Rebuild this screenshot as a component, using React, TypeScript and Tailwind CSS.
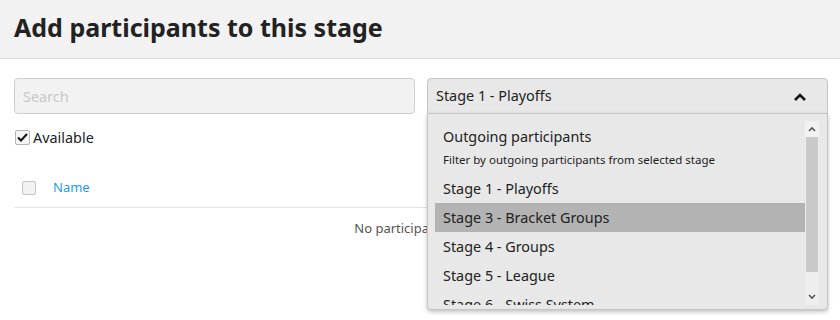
import { useState } from "react"

const stages = [
  "Stage 1 - Playoffs",
  "Stage 3 - Bracket Groups",
  "Stage 4 - Groups",
  "Stage 5 - League",
  "Stage 6 - Swiss System",
]

export default function App() {
  const [available, setAvailable] = useState(true)
  const [search, setSearch] = useState("")
  const active = "Stage 3 - Bracket Groups"

  return (
    <main className="w-[840px] h-[320px] overflow-hidden bg-white text-[#222] font-['Noto_Sans',sans-serif]">
      {/* HEADER */}
      <div className="h-[59px] bg-[#f2f2f2] border-b border-[#dedede] flex items-center px-[14px]">
        <h1 className="text-[25px] font-bold leading-none pb-[3px]">
          Add participants to this stage
        </h1>
      </div>

      <div className="pl-[14px] pr-[12px] pt-[19px]">
        {/* FILTERS */}
        <div className="grid grid-cols-2 gap-3">
          <input
            value={search}
            onChange={e => setSearch(e.target.value)}
            placeholder="Search"
            className="h-[36px] rounded-[4px] border border-[#cfcfcf] bg-[#f2f2f2] px-[8px] text-[14.4px] outline-none placeholder:text-[#c8c8c8]"
          />

          <div className="relative">
            <div className="h-[36px] rounded-t-[4px] border border-[#c4c4c4] bg-[#e8e8e8] flex items-center justify-between pl-[8px] pr-[20px] text-[14.4px]">
              <span>Stage 1 - Playoffs</span>
              <svg width="14" height="10" viewBox="0 0 14 10" className="mt-[2px]">
                <path d="M2 8 L7 3 L12 8" fill="none" stroke="#111" strokeWidth="2.6" />
              </svg>
            </div>

            {/* DROPDOWN */}
            <div className="absolute left-0 right-0 top-[35px] h-[197px] z-10 rounded-b-[4px] border border-[#c4c4c4] bg-[#e8e8e8] shadow-[0_2px_4px_rgba(0,0,0,0.25)] pl-[7px] pr-[8px] pt-[7px]">
              <div className="flex h-[184px] overflow-hidden">
                <ul className="flex-1 overflow-hidden">
                  <li className="px-[8px] h-[53px] pt-[5px]">
                    <div className="text-[14.4px] leading-[22px]">Outgoing participants</div>
                    <div className="text-[11.5px] leading-[18px] mt-[3px]">
                      Filter by outgoing participants from selected stage
                    </div>
                  </li>
                  {stages.map(s => (
                    <li
                      key={s}
                      className={`h-[29px] flex items-center px-[8px] text-[14.4px] whitespace-nowrap ${
                        s === active ? "bg-[#b3b3b3]" : ""
                      }`}
                    >
                      {s}
                    </li>
                  ))}
                </ul>

                {/* SCROLLBAR */}
                <div className="w-[14px] flex flex-col bg-[#eeeeee]">
                  <div className="h-[16px] flex items-center justify-center bg-[#f2f2f2]">
                    <svg width="8" height="6" viewBox="0 0 8 6">
                      <path d="M1 5 L4 2 L7 5" fill="none" stroke="#555" strokeWidth="1.6" />
                    </svg>
                  </div>
                  <div className="mx-[1px] h-[135px] bg-[#c9c9c9]" />
                  <div className="flex-1 flex items-end justify-center pb-[5px]">
                    <svg width="8" height="6" viewBox="0 0 8 6">
                      <path d="M1 1 L4 4 L7 1" fill="none" stroke="#555" strokeWidth="1.6" />
                    </svg>
                  </div>
                </div>
              </div>
            </div>
          </div>
        </div>

        {/* AVAILABLE */}
        <label className="mt-[13px] flex items-center gap-[3px] text-[14.4px] w-fit">
          <input
            type="checkbox"
            checked={available}
            onChange={e => setAvailable(e.target.checked)}
            className="hidden"
          />
          <span className="w-[15px] h-[15px] ml-[1px] rounded-[2px] border border-[#b5b5b5] bg-[#f5f5f5] flex items-center justify-center">
            {available && (
              <svg width="11" height="9" viewBox="0 0 11 9">
                <path d="M1 4.5 L4 7.5 L10 1" fill="none" stroke="#111" strokeWidth="2" />
              </svg>
            )}
          </span>
          Available
        </label>

        {/* TABLE */}
        <div className="mt-[24px] h-[35px] border-b border-[#e4e4e4] flex items-center pl-[8px] pb-[3px]">
          <span className="w-[14px] h-[14px] rounded-[2px] border border-[#c4c4c4] bg-[#f2f2f2]" />
          <span className="ml-[17px] text-[13px] text-[#1e9cf0]">Name</span>
        </div>
        <div className="pt-[11px] text-center text-[13px] text-[#555]">
          No participants found
        </div>
      </div>
    </main>
  )
}
